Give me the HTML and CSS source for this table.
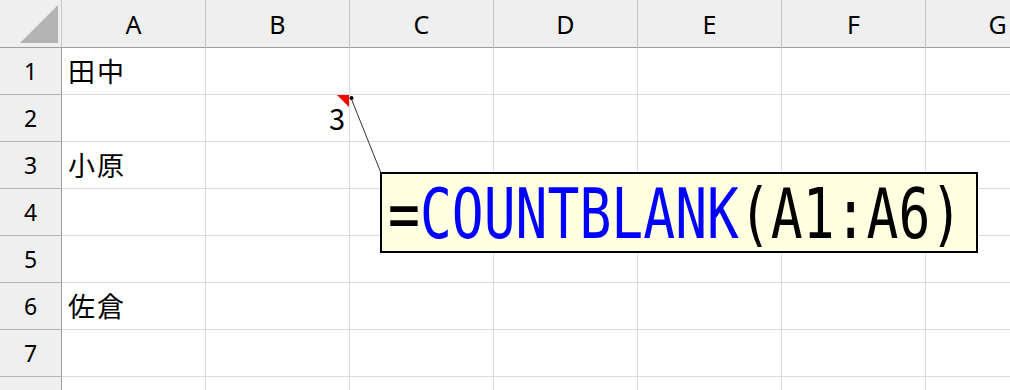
FILE: index.html
```html
<!DOCTYPE html>
<html lang="ja">
<head>
    <meta charset="UTF-8">
    <title>COUNTBLANK</title>
    <link rel="stylesheet" href="styles.css">
</head>
<body>
    <div class="sheet">
        <!-- Column headers -->
        <div class="corner">
            <svg width="61" height="47" viewBox="0 0 61 47"><polygon points="58,5 58,43 20,43" fill="#b4b4b4"/></svg>
        </div>
        <div class="col-head">A</div>
        <div class="col-head">B</div>
        <div class="col-head">C</div>
        <div class="col-head">D</div>
        <div class="col-head">E</div>
        <div class="col-head">F</div>
        <div class="col-head">G</div>

        <!-- Row 1 -->
        <div class="row-head">1</div>
        <div class="cell">田中</div>
        <div class="cell"></div><div class="cell"></div><div class="cell"></div><div class="cell"></div><div class="cell"></div><div class="cell"></div>

        <!-- Row 2 -->
        <div class="row-head">2</div>
        <div class="cell"></div>
        <div class="cell num has-comment">3</div>
        <div class="cell"></div><div class="cell"></div><div class="cell"></div><div class="cell"></div><div class="cell"></div>

        <!-- Row 3 -->
        <div class="row-head">3</div>
        <div class="cell">小原</div>
        <div class="cell"></div><div class="cell"></div><div class="cell"></div><div class="cell"></div><div class="cell"></div><div class="cell"></div>

        <!-- Row 4 -->
        <div class="row-head">4</div>
        <div class="cell"></div><div class="cell"></div><div class="cell"></div><div class="cell"></div><div class="cell"></div><div class="cell"></div><div class="cell"></div>

        <!-- Row 5 -->
        <div class="row-head">5</div>
        <div class="cell"></div><div class="cell"></div><div class="cell"></div><div class="cell"></div><div class="cell"></div><div class="cell"></div><div class="cell"></div>

        <!-- Row 6 -->
        <div class="row-head">6</div>
        <div class="cell">佐倉</div>
        <div class="cell"></div><div class="cell"></div><div class="cell"></div><div class="cell"></div><div class="cell"></div><div class="cell"></div>

        <!-- Row 7 -->
        <div class="row-head">7</div>
        <div class="cell"></div><div class="cell"></div><div class="cell"></div><div class="cell"></div><div class="cell"></div><div class="cell"></div><div class="cell"></div>

        <!-- Row 8 (cut off) -->
        <div class="row-head"></div>
        <div class="cell"></div><div class="cell"></div><div class="cell"></div><div class="cell"></div><div class="cell"></div><div class="cell"></div><div class="cell"></div>

        <!-- Comment callout for B2 -->
        <svg class="connector" width="1010" height="390">
            <line x1="351" y1="98" x2="381" y2="173" stroke="#333" stroke-width="1"/>
            <circle cx="351.5" cy="98" r="2" fill="#000"/>
        </svg>
        <div class="comment">
            <span class="formula"><span class="op">=</span><span class="fn">COUNTBLANK</span><span class="op">(A1:A6)</span></span>
        </div>
    </div>
</body>
</html>
```

FILE: styles.css
```css
body {
    margin: 0;
    background: #fff;
}

.sheet {
    position: relative;
    width: 1010px;
    height: 390px;
    overflow: hidden;
    display: grid;
    grid-template-columns: 62px repeat(7, 144px);
    grid-template-rows: 48px repeat(8, 47px);
    font-family: "Noto Sans", "Noto Sans CJK JP", sans-serif;
}

.corner,
.col-head,
.row-head,
.cell {
    box-sizing: border-box;
    border-right: 1px solid #dadada;
    border-bottom: 1px solid #dadada;
}

.corner {
    background: #efefef;
    border-right-color: #c8c8c8;
    border-bottom: 1px solid #9e9e9e;
}

.corner svg {
    display: block;
}

.col-head {
    display: flex;
    align-items: center;
    justify-content: center;
    background: #efefef;
    border-right-color: #c0c0c0;
    border-bottom: 1px solid #9e9e9e;
    font-size: 25px;
    color: #000;
}

.row-head {
    display: flex;
    align-items: center;
    justify-content: center;
    background: #efefef;
    border-right: 1px solid #9e9e9e;
    border-bottom-color: #b4b4b4;
    font-size: 23px;
    color: #000;
}

.cell {
    display: flex;
    align-items: center;
    padding: 0 5px 2px 6px;
    font-family: "Noto Sans CJK JP", sans-serif;
    font-size: 27px;
    letter-spacing: 2px;
    color: #000;
}

.cell.num {
    justify-content: flex-end;
    padding: 0 4px 2px 0;
    font-size: 29px;
    letter-spacing: 0;
}

/* red comment marker in the cell corner */
.has-comment {
    position: relative;
}

.has-comment::after {
    content: "";
    position: absolute;
    top: 0;
    right: 0;
    border-top: 12px solid #ff0000;
    border-left: 12px solid transparent;
}

.connector {
    position: absolute;
    left: 0;
    top: 0;
    pointer-events: none;
}

.comment {
    position: absolute;
    left: 380px;
    top: 172px;
    width: 598px;
    height: 81px;
    box-sizing: border-box;
    border: 2px solid #000;
    background: #ffffe1;
    padding: 6px 0 0 6px;
    overflow: hidden;
}

.formula {
    display: inline-block;
    font-family: "DejaVu Sans Mono", monospace;
    font-size: 69px;
    line-height: 68px;
    white-space: nowrap;
    transform: scaleX(0.768);
    transform-origin: left top;
}

.op {
    color: #000;
}

.fn {
    color: #0000ff;
}
```
